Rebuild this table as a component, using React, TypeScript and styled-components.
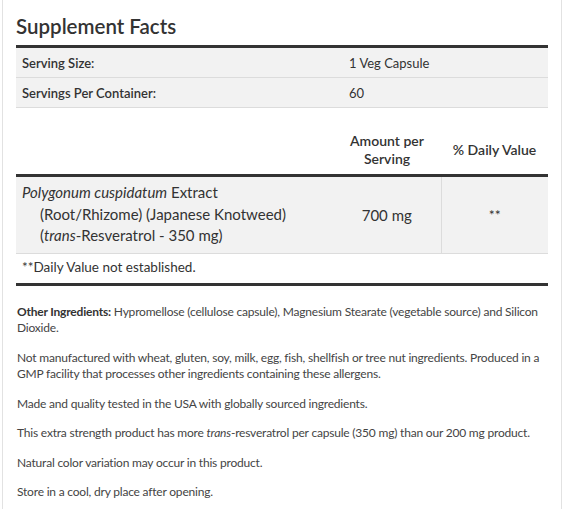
import React from "react";
import styled, { createGlobalStyle } from "styled-components";

const Global = createGlobalStyle`
  html, body { margin: 0; padding: 0; background: #fff; }
  body { font-family: Lato, "Noto Sans", sans-serif; color: #333; }
`;

const Panel = styled.div`
  margin: 0 2px;
  border-left: 1px solid #e2e2e2;
  border-right: 1px solid #e2e2e2;
  padding: 13px 13px 12px;
  min-height: 509px;
  box-sizing: border-box;
`;

const Title = styled.h2`
  margin: 0 0 6px;
  font-size: 20.5px;
  font-weight: 600;
  line-height: 26px;
  color: #333;
`;

const Table = styled.table<{ $top?: boolean }>`
  width: 100%;
  border-collapse: collapse;
  table-layout: fixed;
  border-top: ${(p) => (p.$top ? "3px solid #333" : "none")};
  font-size: 13px;
  color: #333;
`;

const ServingRow = styled.tr`
  background: #f2f2f2;
  border-bottom: 1px solid #dcdcdc;
`;

const LabelCell = styled.td`
  box-sizing: border-box;
  width: 327px;
  padding: 0 6px;
  height: 29px;
  font-weight: 600;
`;

const ValueCell = styled.td`
  padding: 0 6px;
  height: 29px;
  font-weight: 400;
`;

const Spacer = styled.div`
  height: 19px;
`;

const HeadRow = styled.tr`
  border-bottom: 3px solid #333;
`;

const HeadCell = styled.th<{ $w?: number }>`
  box-sizing: border-box;
  font-size: 14px;
  font-weight: 600;
  text-align: center;
  line-height: 18px;
  padding: 5px 2px 6px;
  width: ${(p) => (p.$w ? `${p.$w}px` : "auto")};
`;

const IngredientRow = styled.tr`
  background: #f2f2f2;
  border-bottom: 1px solid #dcdcdc;
`;

const NameCell = styled.td`
  padding: 5px 6px 6px;
  font-size: 15px;
  line-height: 21.5px;
`;

const Indent = styled.div`
  padding-left: 18px;
`;

const AmountCell = styled.td`
  text-align: center;
  font-size: 15px;
  vertical-align: middle;
`;

const DvCell = styled.td`
  text-align: center;
  font-size: 14px;
  vertical-align: middle;
  border-left: 1px solid #dcdcdc;
`;

const FootRow = styled.tr`
  border-bottom: 3px solid #333;
`;

const FootCell = styled.td`
  padding: 4px 6px 7px;
  font-size: 13.5px;
  line-height: 18px;
`;

const Notes = styled.div`
  margin-top: 18px;
  display: flex;
  flex-direction: column;
  gap: 13px;
  font-size: 12px;
  letter-spacing: -0.2px;
  line-height: 16.5px;
  color: #444;
`;

const Note = styled.p`
  margin: 0;
  padding-left: 1px;
`;

const Strong = styled.span`
  font-weight: 700;
  color: #333;
`;

export default function App() {
  return (
    <>
      <Global />
      <Panel>
        <Title>Supplement Facts</Title>
        <Table $top>
          <tbody>
            <ServingRow>
              <LabelCell>Serving Size:</LabelCell>
              <ValueCell>1 Veg Capsule</ValueCell>
            </ServingRow>
            <ServingRow>
              <LabelCell>Servings Per Container:</LabelCell>
              <ValueCell>60</ValueCell>
            </ServingRow>
          </tbody>
        </Table>
        <Spacer />
        <Table>
          <tbody>
            <HeadRow>
              <HeadCell />
              <HeadCell $w={108}>
                Amount per
                <br />
                Serving
              </HeadCell>
              <HeadCell $w={107}>% Daily Value</HeadCell>
            </HeadRow>
            <IngredientRow>
              <NameCell>
                <i>Polygonum cuspidatum</i> Extract
                <Indent>(Root/Rhizome) (Japanese Knotweed)</Indent>
                <Indent>
                  (<i>trans</i>-Resveratrol - 350 mg)
                </Indent>
              </NameCell>
              <AmountCell>700 mg</AmountCell>
              <DvCell>**</DvCell>
            </IngredientRow>
            <FootRow>
              <FootCell colSpan={3}>**Daily Value not established.</FootCell>
            </FootRow>
          </tbody>
        </Table>
        <Notes>
          <Note>
            <Strong>Other Ingredients:</Strong> Hypromellose (cellulose capsule), Magnesium Stearate
            (vegetable source) and Silicon Dioxide.
          </Note>
          <Note>
            Not manufactured with wheat, gluten, soy, milk, egg, fish, shellfish or tree nut
            ingredients. Produced in a GMP facility that processes other ingredients containing these
            allergens.
          </Note>
          <Note>Made and quality tested in the USA with globally sourced ingredients.</Note>
          <Note>
            This extra strength product has more <i>trans</i>-resveratrol per capsule (350 mg) than our
            200 mg product.
          </Note>
          <Note>Natural color variation may occur in this product.</Note>
          <Note>Store in a cool, dry place after opening.</Note>
        </Notes>
      </Panel>
    </>
  );
}
